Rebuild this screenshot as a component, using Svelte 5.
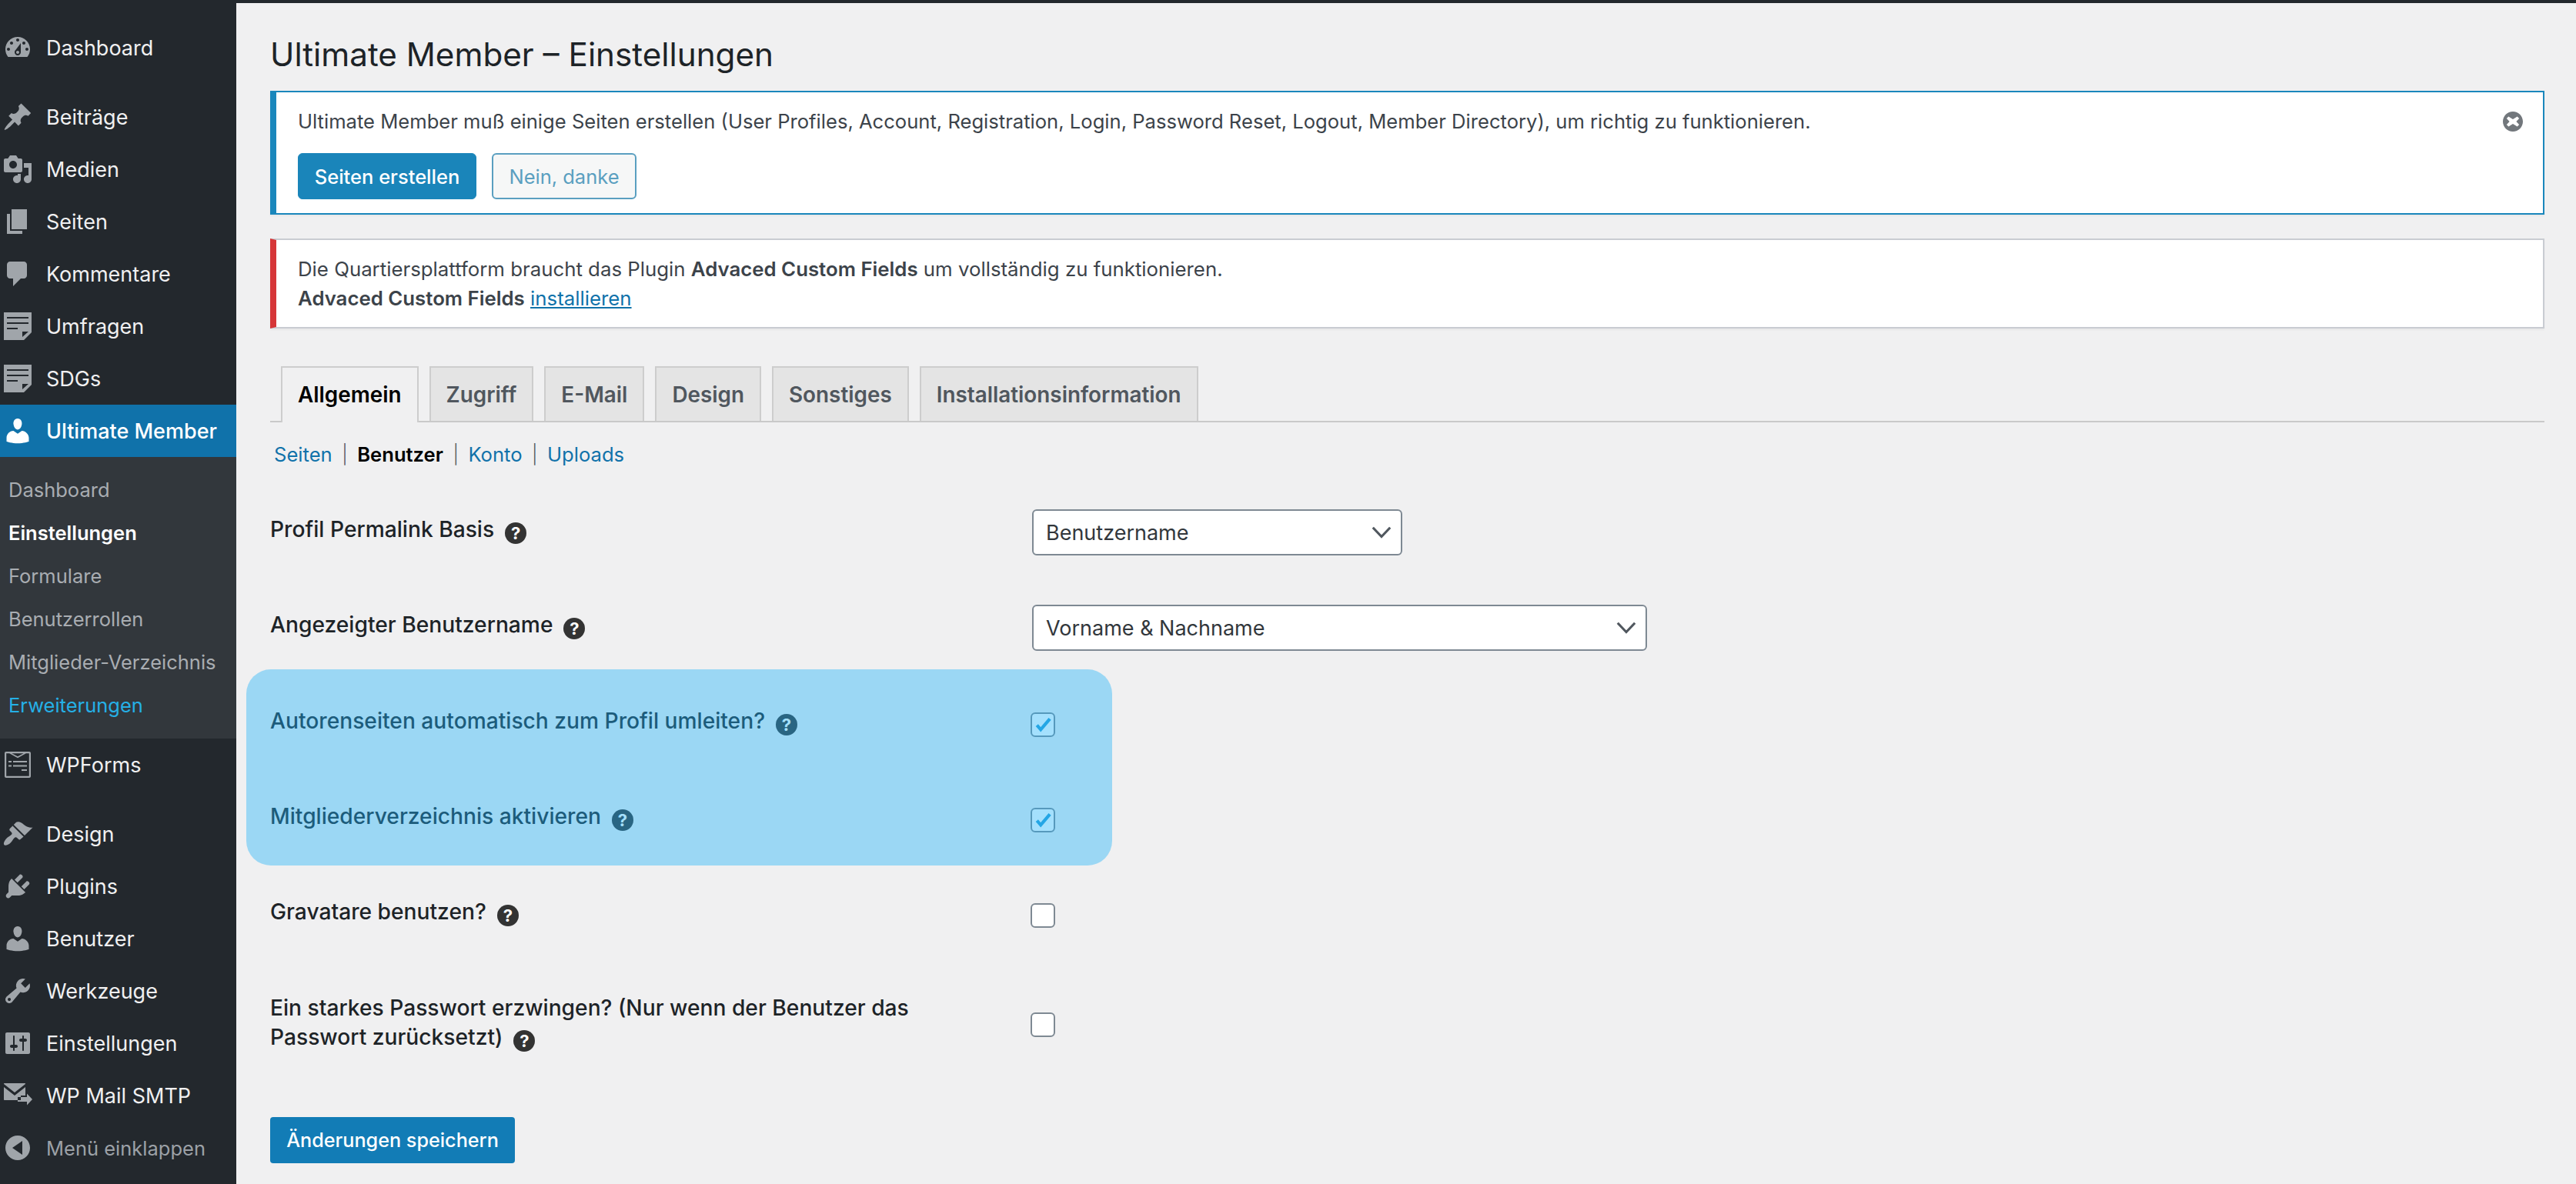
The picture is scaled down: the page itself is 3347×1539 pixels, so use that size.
<script>
  const icons = {
    dashboard: "M3.76 16h12.48c1.1-1.37 1.76-3.11 1.76-5 0-4.42-3.58-8-8-8s-8 3.58-8 8c0 1.89.66 3.63 1.76 5zM10 4c.55 0 1 .45 1 1s-.45 1-1 1-1-.45-1-1 .45-1 1-1zM6 6c.55 0 1 .45 1 1s-.45 1-1 1-1-.45-1-1 .45-1 1-1zm8 0c.55 0 1 .45 1 1s-.45 1-1 1-1-.45-1-1 .45-1 1-1zm-5.37 5.55L12 7v6c0 1.1-.9 2-2 2s-2-.9-2-2c0-.57.24-1.08.63-1.45zM4 10c.55 0 1 .45 1 1s-.45 1-1 1-1-.45-1-1 .45-1 1-1zm12 0c.55 0 1 .45 1 1s-.45 1-1 1-1-.45-1-1 .45-1 1-1zm-5 3c0-.55-.45-1-1-1s-1 .45-1 1 .45 1 1 1 1-.45 1-1z",
    post: "M10.44 3.02l1.82-1.82 6.36 6.35-1.83 1.82c-1.05-.68-2.48-.57-3.41.36l-.75.75c-.92.93-1.04 2.35-.35 3.41l-1.83 1.82-2.41-2.41-2.8 2.79c-.42.42-3.38 2.71-3.8 2.29s1.86-3.39 2.28-3.81l2.79-2.79L4.1 9.36l1.83-1.82c1.05.69 2.48.57 3.4-.36l.75-.75c.93-.92 1.05-2.35.36-3.41z",
    media: "M13 11V4c0-.55-.45-1-1-1h-1.67L9 1H5L3.67 3H2c-.55 0-1 .45-1 1v7c0 .55.45 1 1 1h10c.55 0 1-.45 1-1zM7 4.5c1.38 0 2.5 1.12 2.5 2.5S8.38 9.5 7 9.5 4.5 8.38 4.5 7 5.62 4.5 7 4.5zM14 6h5v10.5c0 1.38-1.12 2.5-2.5 2.5S14 17.88 14 16.5s1.12-2.5 2.5-2.5c.17 0 .34.02.5.05V9h-3V6zm-4 8.05V13h2v3.5c0 1.38-1.12 2.5-2.5 2.5S7 17.88 7 16.5 8.12 14 9.5 14c.17 0 .34.02.5.05z",
    page: "M6 15V2h10v13H6zm-1 1h8v2H3V5h2v11z",
    comments: "M5 2h9c1.1 0 2 .9 2 2v7c0 1.1-.9 2-2 2h-2l-5 5v-5H5c-1.1 0-2-.9-2-2V4c0-1.1.9-2 2-2z",
    note: "M1 1h18v13l-5 5H1zM3 4v1h14V4zM3 7.5v1h14v-1zM3 11v1h7v-1zM13 13.5v3.5l4-3.5z",
    user: "M10 9.25c-2.27 0-2.73-3.44-2.73-3.44C7 4.02 7.82 2 9.97 2c2.16 0 2.98 2.02 2.71 3.81 0 0-.41 3.44-2.68 3.44zm0 2.57L12.72 10c2.39 0 4.52 2.33 4.52 4.53v2.49s-3.65 1.13-7.24 1.13c-3.65 0-7.24-1.13-7.24-1.13v-2.49c0-2.25 1.94-4.48 4.47-4.48z",
    forms: "M2.5 1.5h15c.6 0 1 .4 1 1v15c0 .6-.4 1-1 1h-15c-.6 0-1-.4-1-1v-15c0-.6.4-1 1-1zM2.6 2.6v14.8h14.8V2.6h-2l-5.4 3-5.4-3zM6.2 2.6L10 4.6l3.8-2zM4 7.5v1h2v-1zM7 7.5v1h9v-1zM4 10.2v1h2v-1zM7 10.2v1h9v-1zM12.500 13v1h3.500v-1z",
    brush: "M14.48 11.06L7.41 3.99l1.5-1.5c.5-.56 2.3-.47 3.51.32 1.21.8 1.43 1.28 2.91 2.1 1.18.64 2.45 1.26 4.45.85zm-.71.71L6.7 4.7 4.93 6.47c-.39.39-.39 1.02 0 1.41l1.06 1.06c.39.39.39 1.03 0 1.42-.6.6-1.43 1.11-2.21 1.69-.35.26-.7.53-1.01.84-1.3 1.3-2.3 3.4-1.5 4.2s2.900-.2 4.200-1.500c.31-.31.58-.66.84-1.01.58-.78 1.09-1.61 1.69-2.21.39-.39 1.02-.39 1.41 0l1.06 1.06c.39.39 1.03.39 1.42 0z",
    plugin: "M13.11 4.36L9.87 7.6 8 5.73l3.24-3.24c.35-.34 1.05-.2 1.56.32.52.51.66 1.21.31 1.55zm-8 1.77l.91-1.12 9.01 9.01-1.19.84c-.71.71-2.63 1.16-3.82 1.16H6.14L4.9 17.26c-.59.59-1.54.59-2.12 0-.59-.58-.59-1.53 0-2.12l1.24-1.24v-3.88c0-1.13.4-3.19 1.09-3.89zm7.26 3.97l3.24-3.24c.34-.35 1.04-.21 1.55.31.52.51.66 1.21.31 1.55l-3.24 3.25z",
    tools: "M16.68 9.77c-1.34 1.34-3.3 1.67-4.95.99l-5.41 6.52c-.99.99-2.59.99-3.58 0s-.99-2.59 0-3.57l6.52-5.42c-.68-1.65-.35-3.61.99-4.95 1.28-1.28 3.12-1.62 4.72-1.06l-2.89 2.89 2.82 2.82 2.86-2.87c.53 1.58.18 3.39-1.08 4.65zM3.81 16.21c.4.39 1.04.39 1.43 0 .4-.4.4-1.04 0-1.43-.39-.4-1.03-.4-1.43 0-.39.39-.39 1.03 0 1.43z",
    settings: "M18 16V4c0-.55-.45-1-1-1H3c-.55 0-1 .45-1 1v12c0 .55.45 1 1 1h14c.55 0 1-.45 1-1zM8 11h1c.55 0 1 .45 1 1s-.45 1-1 1H8v1.500c0 .28-.22.5-.5.5s-.5-.22-.5-.5V13H6c-.55 0-1-.45-1-1s.45-1 1-1h1V5.500c0-.28.22-.5.5-.5s.5.22.5.5V11zm5-2h-1c-.55 0-1-.45-1-1s.45-1 1-1h1V5.500c0-.28.22-.5.5-.5s.5.22.5.5V7h1c.55 0 1 .45 1 1s-.45 1-1 1h-1v5.500c0 .28-.22.5-.5.5s-.5-.22-.5-.5V9z",
    smtp: "M1.500 2h13c.4 0 .5.2.5.5L8 8 1 2.500c0-.3.1-.5.5-.5zM1 4.500l7 5.500 7-5.500V10h-3v3H1.500c-.3 0-.5-.2-.5-.5zM13 11h3V8.800l3.500 3.700-3.500 3.700V14H10v-3z",
    collapse: "M18 10c0-4.420-3.580-8-8-8s-8 3.580-8 8 3.580 8 8 8 8-3.580 8-8zM13 5.500v9L6.500 10z",
    dismiss: "M10 2c4.420 0 8 3.580 8 8s-3.580 8-8 8-8-3.580-8-8 3.580-8 8-8zm3.500 4L10 8.200 6.500 6 5 7.500 7.300 10 5 12.500 6.500 14 10 11.800 13.500 14 15 12.500 12.700 10 15 7.500z"
  };

  const topMenu = [
    { label: "Dashboard", icon: "dashboard" },
    { label: "Beiträge", icon: "post", sep: true },
    { label: "Medien", icon: "media" },
    { label: "Seiten", icon: "page" },
    { label: "Kommentare", icon: "comments" },
    { label: "Umfragen", icon: "note" },
    { label: "SDGs", icon: "note" }
  ];
  const subMenu = ["Dashboard", "Einstellungen", "Formulare", "Benutzerrollen", "Mitglieder-Verzeichnis", "Erweiterungen"];
  const bottomMenu = [
    { label: "WPForms", icon: "forms" },
    { label: "Design", icon: "brush", sep: true },
    { label: "Plugins", icon: "plugin" },
    { label: "Benutzer", icon: "user" },
    { label: "Werkzeuge", icon: "tools" },
    { label: "Einstellungen", icon: "settings" },
    { label: "WP Mail SMTP", icon: "smtp" },
    { label: "Menü einklappen", icon: "collapse", muted: true }
  ];
  const tabs = ["Allgemein", "Zugriff", "E-Mail", "Design", "Sonstiges", "Installationsinformation"];
  const checks = [
    { label: "Autorenseiten automatisch zum Profil umleiten?", checked: true },
    { label: "Mitgliederverzeichnis aktivieren", checked: true },
    { label: "Gravatare benutzen?", checked: false }
  ];
</script>

{#snippet menuItem(item)}
  <a class="item" class:sep={item.sep} class:muted={item.muted} href="#top">
    <svg class="ico" viewBox="0 0 20 20"><path fill-rule="evenodd" d={icons[item.icon]} /></svg>
    <span>{item.label}</span>
  </a>
{/snippet}

{#snippet help()}
  <span class="help">?</span>
{/snippet}

{#snippet chevron()}
  <svg class="chev" viewBox="0 0 20 20"><path d="M2 5.500l8 8.500 8-8.500" fill="none" stroke="#50575e" stroke-width="2.200" /></svg>
{/snippet}

<div class="admin">
  <nav class="side">
    {#each topMenu as item}
      {@render menuItem(item)}
    {/each}
    <a class="item current" href="#top">
      <svg class="ico" viewBox="0 0 20 20"><path d={icons.user} /></svg>
      <span>Ultimate Member</span>
    </a>
    <ul class="sub">
      {#each subMenu as s, i}
        <li class:on={i === 1} class:hover={i === 5}>{s}</li>
      {/each}
    </ul>
    {#each bottomMenu as item}
      {@render menuItem(item)}
    {/each}
  </nav>

  <main class="content">
    <h1>Ultimate Member – Einstellungen</h1>

    <div class="notice info">
      <div class="notice-top">
        <p>Ultimate Member muß einige Seiten erstellen (User Profiles, Account, Registration, Login, Password Reset, Logout, Member Directory), um richtig zu funktionieren.</p>
        <svg class="dismiss" viewBox="2 2 16 16"><path fill-rule="evenodd" d={icons.dismiss} /></svg>
      </div>
      <div class="notice-btns">
        <button class="btn primary">Seiten erstellen</button>
        <button class="btn ghost">Nein, danke</button>
      </div>
    </div>

    <div class="notice error">
      <p>Die Quartiersplattform braucht das Plugin <b>Advaced Custom Fields</b> um vollständig zu funktionieren.</p>
      <p><b>Advaced Custom Fields</b> <a href="#top">installieren</a></p>
    </div>

    <div class="tabs">
      {#each tabs as t, i}
        <div class="tab" class:active={i === 0}>{t}</div>
      {/each}
    </div>

    <div class="subnav">
      <a href="#top">Seiten</a><i>|</i><b>Benutzer</b><i>|</i><a href="#top">Konto</a><i>|</i><a href="#top">Uploads</a>
    </div>

    <div class="form">
      <div class="overlay"></div>
      <div class="row">
        <div class="label">Profil Permalink Basis{@render help()}</div>
        <div class="select short"><span>Benutzername</span>{@render chevron()}</div>
      </div>
      <div class="row">
        <div class="label">Angezeigter Benutzername{@render help()}</div>
        <div class="select long"><span>Vorname &amp; Nachname</span>{@render chevron()}</div>
      </div>
      <div class="checks">
        {#each checks as c}
          <div class="row">
            <div class="label">{c.label}{@render help()}</div>
            <span class="box">
              {#if c.checked}
                <svg viewBox="0 0 20 20"><path d="M4.500 10.500l3.500 4 8.500-10" fill="none" stroke="#2a9fd8" stroke-width="3" /></svg>
              {/if}
            </span>
          </div>
        {/each}
        <div class="row tall">
          <div class="label">Ein starkes Passwort erzwingen? (Nur wenn der Benutzer das Passwort zurücksetzt){@render help()}</div>
          <span class="box"></span>
        </div>
      </div>
      <button class="btn save">Änderungen speichern</button>
    </div>
  </main>
</div>

<style>
  :global(body) {
    background: #f0f0f1;
    font-family: Inter, "Liberation Sans", sans-serif;
    color: #2c3338;
  }

  .admin {
    display: flex;
    min-height: 1539px;
    border-top: 4px solid #23282d;
  }

  .side {
    width: 307px;
    flex: none;
    margin-top: -4px;
    padding-top: 28px;
    background: #23282d;
    box-sizing: border-box;
    overflow: hidden;
  }

  .item {
    display: flex;
    align-items: center;
    gap: 17px;
    height: 68px;
    padding-left: 3px;
    font-size: 27px;
    color: #f0f0f1;
    text-decoration: none;
  }

  .item.sep {
    margin-top: 22px;
  }

  .item.muted {
    color: #9ca1a7;
    font-size: 25.500px;
  }

  .ico {
    width: 40px;
    height: 40px;
    flex: none;
    fill: #a0a5aa;
  }

  .item.current {
    background: #1072aa;
    color: #fff;
    font-weight: 500;
  }

  .item.current .ico {
    fill: #fff;
  }

  .sub {
    list-style: none;
    margin: 0;
    padding: 15px 0 15px 11px;
    background: #32373c;
    font-size: 25.500px;
    color: #a9adb2;
  }

  .sub li {
    height: 56px;
    line-height: 56px;
    white-space: nowrap;
  }

  .sub li.on {
    color: #fff;
    font-weight: 600;
  }

  .sub li.hover {
    color: #25b0e6;
  }

  .content {
    flex: 1;
    padding: 0 41px 0 44px;
    min-width: 0;
  }

  h1 {
    margin: 0;
    height: 114px;
    line-height: 134px;
    font-size: 42.200px;
    font-weight: 400;
    color: #1d2327;
    box-sizing: border-box;
  }

  .notice {
    background: #fff;
    box-sizing: border-box;
    border: 2px solid #c9ccd2;
    border-left-width: 8px;
    box-shadow: 0 2px 2px rgba(0, 0, 0, 0.04);
    font-size: 25.600px;
    line-height: 38px;
    color: #3c434a;
  }

  .notice p {
    margin: 0;
  }

  .notice.info {
    height: 161px;
    border-color: #1a87bc;
    padding: 19px 26px 0 28px;
  }

  .notice-top {
    display: flex;
    justify-content: space-between;
    align-items: center;
  }

  .dismiss {
    width: 26px;
    height: 26px;
    fill: #72777c;
  }

  .notice-btns {
    display: flex;
    gap: 20px;
    margin-top: 22px;
  }

  .btn {
    height: 60px;
    box-sizing: border-box;
    border-radius: 6px;
    font-family: inherit;
    font-size: 25.500px;
    padding: 0 20px;
  }

  .btn.primary {
    width: 232px;
    padding: 0;
    background: #1a85ba;
    border: 1px solid #1a85ba;
    color: #fff;
    font-weight: 500;
  }

  .btn.ghost {
    width: 188px;
    padding: 0;
    background: #f6f7f7;
    border: 2px solid #5a9fc0;
    color: #5a9fc0;
  }

  .notice.error {
    height: 117px;
    margin-top: 31px;
    border-left-color: #d63638;
    padding: 19px 28px 0;
    font-size: 25.800px;
  }

  .notice.error b {
    font-weight: 600;
  }

  .notice.error a {
    color: #1072aa;
  }

  .tabs {
    display: flex;
    gap: 14px;
    margin-top: 49px;
    padding-left: 14px;
    height: 71px;
    border-bottom: 2px solid #c9c9c9;
  }

  .tab {
    height: 71px;
    box-sizing: border-box;
    padding: 0 20px;
    line-height: 70px;
    border: 2px solid #cdcdcd;
    border-bottom: none;
    background: #e4e4e4;
    font-size: 27.850px;
    font-weight: 600;
    color: #50575e;
  }

  .tab.active {
    height: 73px;
    background: #f0f0f1;
    color: #000;
  }

  .subnav {
    display: flex;
    align-items: center;
    margin-top: 23px;
    padding-left: 5px;
    height: 36px;
    font-size: 25.600px;
  }

  .subnav a {
    color: #1072aa;
    text-decoration: none;
  }

  .subnav b {
    color: #000;
    font-weight: 600;
  }

  .subnav i {
    font-style: normal;
    font-weight: 300;
    color: #50575e;
    margin: 0 12.500px;
    font-size: 24px;
  }

  .form {
    position: relative;
    margin-top: 22px;
  }

  /* highlight painted over the two checkbox rows */
  .overlay {
    position: absolute;
    top: 240px;
    left: -31px;
    width: 1125px;
    height: 255px;
    border-radius: 32px;
    background: rgba(27, 177, 250, 0.4);
    pointer-events: none;
  }

  .row {
    display: grid;
    grid-template-columns: 990px auto;
    align-items: center;
    justify-items: start;
    height: 124px;
  }

  .row.tall {
    height: 160px;
  }

  .checks {
    margin-top: 2px;
  }

  .checks .label {
    padding-bottom: 11px;
  }

  .checks .tall .label {
    padding-bottom: 6px;
  }

  .label {
    max-width: 860px;
    padding-bottom: 8px;
    font-size: 28.200px;
    line-height: 38px;
    font-weight: 500;
    color: #1d2327;
  }

  .help {
    display: inline-block;
    width: 28px;
    height: 28px;
    margin-left: 14px;
    border-radius: 50%;
    background: #333;
    color: #fff;
    font-size: 22px;
    font-weight: 700;
    line-height: 28px;
    text-align: center;
    vertical-align: -3px;
  }

  .select {
    display: flex;
    align-items: center;
    justify-content: space-between;
    height: 60px;
    box-sizing: border-box;
    padding: 0 11px 0 16px;
    background: #fff;
    border: 2px solid #7e8993;
    border-radius: 6px;
    font-size: 27px;
    color: #32373c;
  }

  .select.short {
    width: 481px;
  }

  .select.long {
    width: 799px;
  }

  .chev {
    width: 28px;
    height: 28px;
  }

  .box {
    display: block;
    width: 32px;
    height: 32px;
    box-sizing: border-box;
    margin-left: -2px;
    background: #fff;
    border: 2px solid #7e8993;
    border-radius: 6px;
  }

  .box svg {
    display: block;
    width: 28px;
    height: 28px;
  }

  .btn.save {
    display: block;
    width: 318px;
    padding: 0;
    margin-top: 40px;
    background: #127cb6;
    border: none;
    border-radius: 4px;
    color: #fff;
    font-size: 25.200px;
    font-weight: 500;
  }
</style>
